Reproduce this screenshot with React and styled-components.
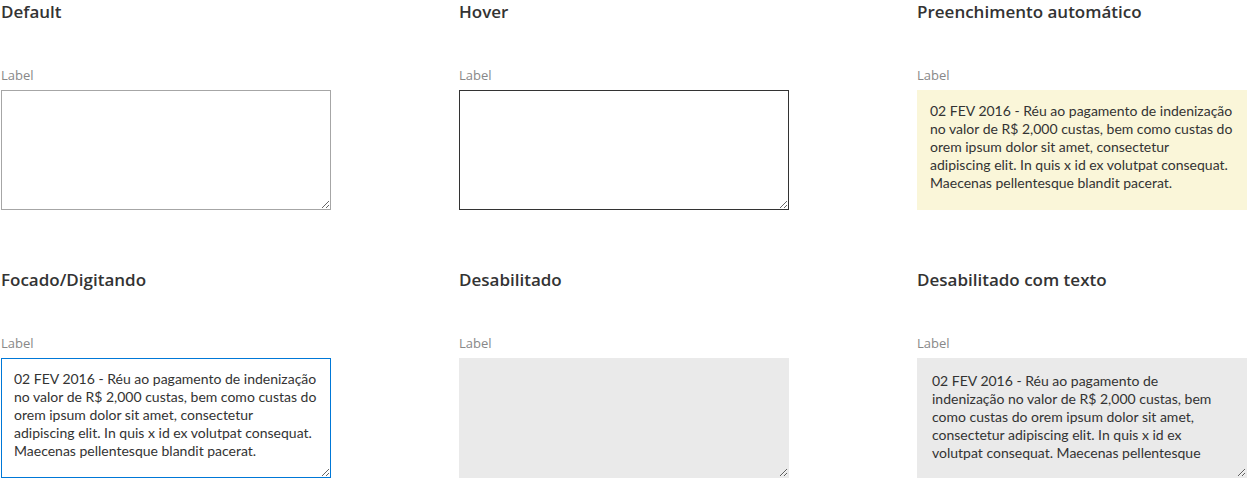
import React from "react";
import styled, { createGlobalStyle, css } from "styled-components";

const GlobalStyle = createGlobalStyle`
  body {
    margin: 0;
    background: #ffffff;
    font-family: "Open Sans", "Noto Sans", sans-serif;
  }
`;

const LONG_TEXT = [
  "02 FEV 2016 - Réu ao pagamento de indenização",
  "no valor de R$ 2,000 custas, bem como custas do",
  "orem ipsum dolor sit amet, consectetur",
  "adipiscing elit. In quis x id ex volutpat consequat.",
  "Maecenas pellentesque blandit pacerat.",
].join("\n");

const NARROW_TEXT = [
  "02 FEV 2016 - Réu ao pagamento de",
  "indenização no valor de R$ 2,000 custas, bem",
  "como custas do orem ipsum dolor sit amet,",
  "consectetur adipiscing elit. In quis x id ex",
  "volutpat consequat. Maecenas pellentesque",
].join("\n");

const states = [
  { title: "Default", variant: "default" },
  { title: "Hover", variant: "hover" },
  { title: "Preenchimento automático", variant: "autofill", text: LONG_TEXT },
  { title: "Focado/Digitando", variant: "focus", text: LONG_TEXT },
  { title: "Desabilitado", variant: "disabled", disabled: true },
  { title: "Desabilitado com texto", variant: "disabledText", text: NARROW_TEXT, disabled: true },
];

const App = () => {
  return (
    <>
      <GlobalStyle />
      <Board>
        {states.map(({ title, variant, text, disabled }) => (
          <Cell key={title}>
            <Title>{title}</Title>
            <Label>Label</Label>
            <Field
              $variant={variant}
              disabled={disabled}
              readOnly
              wrap='off'
              defaultValue={text || ""}
            />
          </Cell>
        ))}
      </Board>
    </>
  );
};

export default App;

const variants = {
  default: css`
    border-color: #a6a6a6;
  `,
  hover: css`
    border-color: #333333;
  `,
  autofill: css`
    border-color: #faf6d9;
    background-color: #faf6d9;
    resize: none;
  `,
  focus: css`
    border-color: #0078d7;
  `,
  disabled: css`
    border-color: #eaeaea;
    background-color: #eaeaea;
  `,
  disabledText: css`
    border-color: #eaeaea;
    background-color: #eaeaea;
    padding: 13px 14px;
  `,
};

const Board = styled.div`
  display: grid;
  grid-template-columns: repeat(3, 330px);
  column-gap: 128px;
  row-gap: 58px;
  padding-left: 1px;
`;

const Cell = styled.div`
  display: flex;
  flex-direction: column;
`;

const Title = styled.h2`
  margin: 0;
  font-size: 17px;
  font-weight: 600;
  line-height: 24px;
  color: #333333;
`;

const Label = styled.label`
  margin-top: 43px;
  font-size: 13px;
  line-height: 16px;
  color: #888888;
`;

const Field = styled.textarea`
  margin: 7px 0 0;
  width: 330px;
  height: 120px;
  box-sizing: border-box;
  padding: 11px 12px;
  border: 1px solid #a6a6a6;
  border-radius: 0;
  outline: none;
  background-color: #ffffff;
  font-family: "Lato", "Open Sans", sans-serif;
  font-size: 14px;
  line-height: 18px;
  color: #333333;
  -webkit-text-fill-color: #333333;
  opacity: 1;
  overflow: hidden;
  resize: vertical;
  ${(props) => variants[props.$variant]}
`;
